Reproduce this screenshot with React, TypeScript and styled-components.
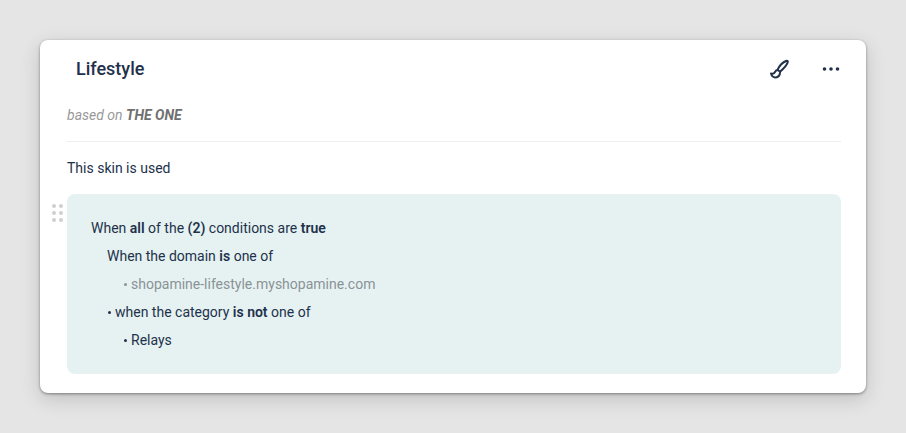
import { createGlobalStyle } from "styled-components";
import styled from "styled-components";

const GlobalStyle = createGlobalStyle`
  html, body {
    margin: 0;
    height: 100%;
    background: #e5e5e5;
    font-family: Roboto, "Noto Sans", sans-serif;
    color: #22314a;
  }
`;

const Page = styled.div`
  width: 906px;
  height: 433px;
  box-sizing: border-box;
  padding: 40px;
  overflow: hidden;
`;

const Card = styled.section`
  width: 826px;
  height: 353px;
  box-sizing: border-box;
  padding: 0 25px 19px 27px;
  background: #fff;
  border-radius: 8px;
  box-shadow: 0 1px 3px rgba(0, 0, 0, 0.4), 0 6px 20px rgba(0, 0, 0, 0.16);
`;

const Header = styled.header`
  height: 58px;
  display: flex;
  align-items: center;
  padding-left: 9px;
`;

const Title = styled.h2`
  flex: 1;
  margin: 0 0 2px;
  font-size: 18px;
  font-weight: 500;
  color: #22314a;
`;

const Actions = styled.div`
  display: flex;
  align-items: center;
  gap: 31px;
`;

const IconBox = styled.span`
  display: flex;
  width: 20px;
  height: 20px;
`;

const BasedOn = styled.div`
  height: 43px;
  font-size: 14px;
  line-height: 34px;
  font-style: italic;
  color: #999;
  border-bottom: 1px solid #eee;

  b {
    font-weight: 700;
    color: #707070;
  }
`;

const Usage = styled.p`
  margin: 0;
  height: 52px;
  font-size: 14px;
  line-height: 52px;
  color: #22314a;
`;

const RuleRow = styled.div`
  position: relative;
`;

const Grip = styled.div`
  position: absolute;
  left: -15px;
  top: 10px;
  display: grid;
  grid-template-columns: 4px 4px;
  gap: 3px;
  span {
    width: 4px;
    height: 4px;
    border-radius: 50%;
    background: #cfcfcf;
  }
`;

const RuleBox = styled.div`
  height: 180px;
  box-sizing: border-box;
  padding: 20px 24px;
  background: #e6f2f2;
  border-radius: 8px;
`;

const Line = styled.div<{ $level: number; $muted?: boolean }>`
  height: 28px;
  line-height: 28px;
  font-size: 14px;
  padding-left: ${(p) => p.$level * 16}px;
  color: ${(p) => (p.$muted ? "#8a9296" : "#22314a")};

  b {
    font-weight: 600;
  }
`;

const Dot = styled.span`
  display: inline-block;
  width: 3px;
  height: 3px;
  margin: 0 4px 0 1px;
  vertical-align: 3px;
  border-radius: 50%;
  background: currentColor;
`;

const App = () => (
  <Page>
    <GlobalStyle />
    <Card>
      <Header>
        <Title>Lifestyle</Title>
        <Actions>
          <IconBox>
            <svg width="20" height="20" viewBox="0 0 20 20" fill="none" stroke="#22314a" strokeWidth="2" strokeLinecap="round" strokeLinejoin="round">
              <path d="M7.5 11 C9 7.5 12.8 3.4 16 2 C17.6 1.4 18.2 2.2 17.6 3.6 C16.4 6.6 13.2 10 10.2 12.6" />
              <path d="M7.5 11 L10.2 12.6 C10 15.5 8.6 18.2 5.6 18.4 C3.4 18.5 1.6 17 1 14.4 C2.6 15 4 14.8 4.8 13.2 C5.4 12 6 11 7.5 11 Z" />
            </svg>
          </IconBox>
          <IconBox>
            <svg width="20" height="20" viewBox="0 0 20 20" fill="#22314a">
              <circle cx="3.5" cy="10" r="1.8" />
              <circle cx="10" cy="10" r="1.8" />
              <circle cx="16.5" cy="10" r="1.8" />
            </svg>
          </IconBox>
        </Actions>
      </Header>
      <BasedOn>
        based on <b>THE ONE</b>
      </BasedOn>
      <Usage>This skin is used</Usage>
      <RuleRow>
        <Grip>
          {[0, 1, 2, 3, 4, 5].map((i) => (
            <span key={i} />
          ))}
        </Grip>
        <RuleBox>
          <Line $level={0}>
            When <b>all</b> of the <b>(2)</b> conditions are <b>true</b>
          </Line>
          <Line $level={1}>
            When the domain <b>is</b> one of
          </Line>
          <Line $level={2} $muted>
            <Dot />
            shopamine-lifestyle.myshopamine.com
          </Line>
          <Line $level={1}>
            <Dot />
            when the category <b>is not</b> one of
          </Line>
          <Line $level={2}>
            <Dot />
            Relays
          </Line>
        </RuleBox>
      </RuleRow>
    </Card>
  </Page>
);

export default App;
